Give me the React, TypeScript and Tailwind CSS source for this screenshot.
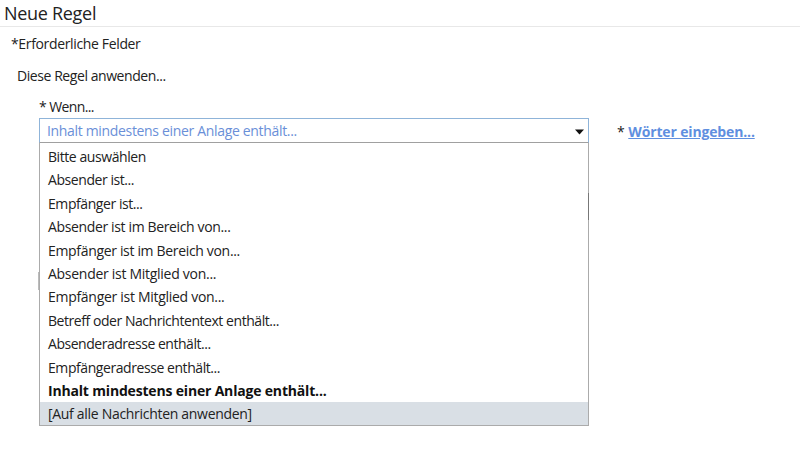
const items = [
  { t: "Bitte auswählen", c: "tracking-[-0.43px]" },
  { t: "Absender ist...", c: "tracking-[-0.43px]" },
  { t: "Empfänger ist...", c: "tracking-[-0.43px]" },
  { t: "Absender ist im Bereich von...", c: "tracking-[-0.36px]" },
  { t: "Empfänger ist im Bereich von...", c: "tracking-[-0.33px]" },
  { t: "Absender ist Mitglied von...", c: "tracking-[-0.28px]" },
  { t: "Empfänger ist Mitglied von...", c: "tracking-[-0.29px]" },
  { t: "Betreff oder Nachrichtentext enthält...", c: "tracking-[-0.45px]" },
  { t: "Absenderadresse enthält...", c: "tracking-[-0.47px]" },
  { t: "Empfängeradresse enthält...", c: "tracking-[-0.43px]" },
];

export default function App() {
  return (
    <div className="w-[800px] h-[449px] overflow-hidden bg-white text-[#222] text-[14px] leading-[20px] font-['Open_Sans',sans-serif] tracking-[-0.43px]">
      <div className="h-[27px] border-b border-[#e8e8e8] pl-[4px] text-[18px] leading-[27px] text-[#222] tracking-[-0.3px]">Neue Regel</div>
      <div className="pl-[11px] pt-[7px] h-[37px] tracking-[-0.35px]">*Erforderliche Felder</div>
      <div className="pl-[17px] pt-[2px] h-[31px]">Diese Regel anwenden...</div>
      <div className="pl-[39px] pt-[2px] h-[24px] tracking-[-0.6px]">* Wenn...</div>
      <div className="flex items-start pl-[39px] mt-[-1px]">
        <div className="w-[550px]">
          <div className="relative h-[25px] border border-[#8fb4d9] border-b-[#a0a0a0] pl-[7px] flex items-center text-[#6a8fd8] tracking-[-0.33px]">
            Inhalt mindestens einer Anlage enthält...
            <svg className="absolute right-[4px] top-[10px]" width="9" height="6" viewBox="0 0 9 6">
              <path d="M0 0.5H9L4.5 5.5Z" fill="#111" />
            </svg>
          </div>
          <div className="relative border border-t-0 border-[#ababab]">
            <span className="absolute right-[-1px] top-[50px] w-[1px] h-[27px] bg-[#777]" />
            <span className="absolute left-[-2px] top-[129px] w-[1px] h-[18px] bg-[#bbb]" />
            <div className="flex flex-col pt-[2px]">
              {items.map(({ t, c }) => (
                <div key={t} className={`h-[23.4px] leading-[23.4px] pl-[8px] ${c}`}>{t}</div>
              ))}
              <div className="h-[23.4px] leading-[23.4px] pl-[8px] font-bold text-[#111] tracking-[-0.18px]">Inhalt mindestens einer Anlage enthält...</div>
              <div className="h-[22.4px] leading-[23.4px] pl-[8px] bg-[#d9dfe5] tracking-[-0.3px]">[Auf alle Nachrichten anwenden]</div>
            </div>
          </div>
        </div>
        <div className="ml-[28px] mt-[4px] flex gap-[4px]">
          <span>*</span>
          <span className="font-bold underline text-[#5f8fe0] tracking-[-0.15px]">Wörter eingeben...</span>
        </div>
      </div>
    </div>
  );
}
